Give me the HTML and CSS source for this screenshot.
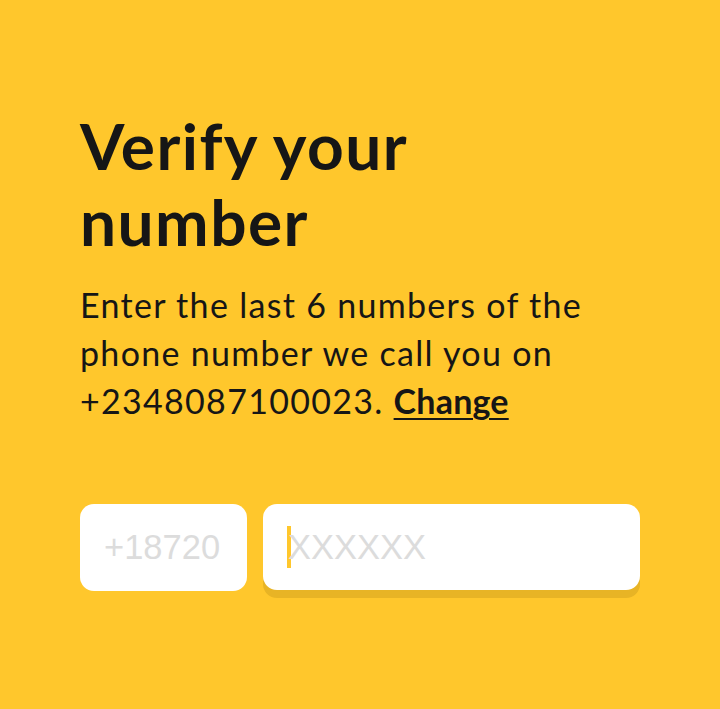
FILE: index.html
```html
<!DOCTYPE html>
<html lang="en">
<head>
<meta charset="utf-8">
<link rel="stylesheet" href="styles.css">
</head>
<body>
<main class="page">
  <h1 class="title">Verify your<br>number</h1>
  <p class="lead">Enter the last 6 numbers of the phone number we call you on +2348087100023. <a class="change" href="#">Change</a></p>
  <div class="fields">
    <div class="field prefix"><span class="ph">+18720</span></div>
    <div class="field code"><span class="caret"></span><span class="ph">XXXXXX</span></div>
  </div>
</main>
</body>
</html>
```

FILE: styles.css
```css
html, body {
  margin: 0;
  padding: 0;
  background: #FFC72C;
}
body {
  width: 720px;
  height: 709px;
  overflow: hidden;
  font-family: "Lato", "Noto Sans", sans-serif;
  color: #161616;
}
.page {
  padding: 108px 80px 0 80px;
}
.title {
  margin: 0;
  font-size: 64px;
  line-height: 76px;
  font-weight: 700;
  letter-spacing: 1.45px;
}
.lead {
  margin: 21px 0 0 0;
  width: 560px;
  font-size: 34px;
  line-height: 48px;
  font-weight: 400;
  letter-spacing: 1.3px;
}
.change {
  color: #161616;
  font-weight: 700;
  letter-spacing: 0.2px;
  text-decoration: underline;
  text-decoration-thickness: 2px;
  text-underline-offset: 4px;
}
.fields {
  display: flex;
  gap: 16px;
  margin-top: 79px;
  width: 560px;
}
.field {
  background: #fff;
  border-radius: 14px;
  height: 87px;
  display: flex;
  align-items: center;
  box-sizing: border-box;
  font-family: "Liberation Sans", Arial, sans-serif;
  font-size: 34.5px;
}
.ph {
  color: #dcdcdc;
}
.prefix {
  width: 167px;
  padding-left: 24px;
}
.code {
  flex: 1;
  height: 86px;
  padding-left: 24px;
  box-shadow: 0 8px 0 #E8B425;
}
.caret {
  width: 4px;
  height: 42px;
  background: #FFC72C;
  margin-right: -3px;
}
```
